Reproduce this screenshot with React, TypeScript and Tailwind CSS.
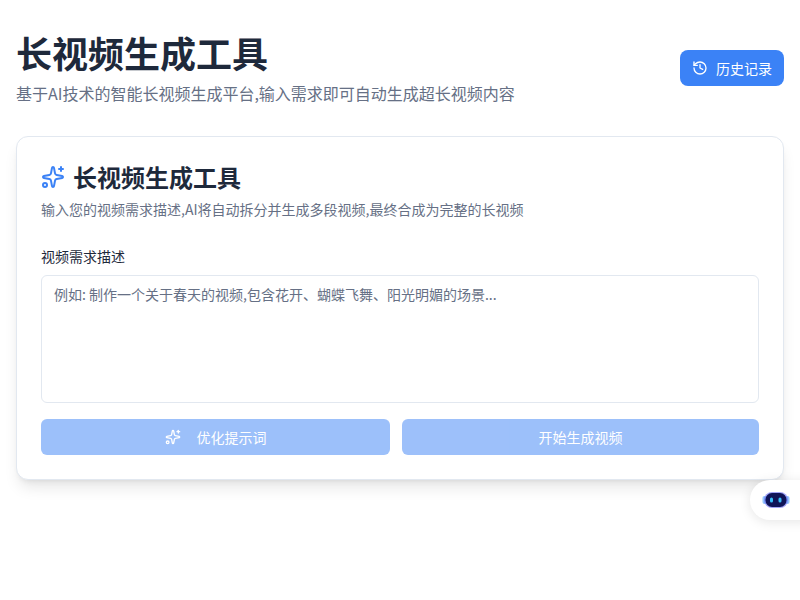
import { History } from "lucide-react";

function Sparkles({ className }: { className: string }) {
  return (
    <svg className={className} viewBox="0 0 24 24" fill="none" stroke="currentColor" strokeWidth="2" strokeLinecap="round" strokeLinejoin="round">
      <path d="M11.017 2.814a1 1 0 0 1 1.966 0l1.051 5.558a2 2 0 0 0 1.594 1.594l5.558 1.051a1 1 0 0 1 0 1.966l-5.558 1.051a2 2 0 0 0-1.594 1.594l-1.051 5.558a1 1 0 0 1-1.966 0l-1.051-5.558a2 2 0 0 0-1.594-1.594l-5.558-1.051a1 1 0 0 1 0-1.966l5.558-1.051a2 2 0 0 0 1.594-1.594z" />
      <path d="M20 2v4" />
      <path d="M22 4h-4" />
      <circle cx="4" cy="20" r="2" />
    </svg>
  );
}

export default function App() {
  return (
    <div className="relative h-[600px] overflow-hidden bg-white font-['Noto_Sans_CJK_SC','Noto_Sans',sans-serif] text-[#1e293b]">
      <div className="p-4 pt-8">
        <div className="mb-[31px] flex items-center justify-between">
          <div>
            <h1 className="mb-2 text-4xl leading-[41px] font-bold">长视频生成工具</h1>
            <p className="text-base leading-6 text-[#667085]">基于AI技术的智能长视频生成平台,输入需求即可自动生成超长视频内容</p>
          </div>
          <button className="mb-px flex h-9 items-center gap-2 rounded-lg bg-[#3b82f6] px-3 text-sm text-white">
            <History className="h-4 w-4" />
            历史记录
          </button>
        </div>
        <div className="rounded-xl border border-[#e2e8f0] bg-white p-6 shadow-lg">
          <div className="flex items-center gap-2">
            <Sparkles className="h-6 w-6 text-[#3b82f6]" />
            <h2 className="text-2xl leading-8 font-bold">长视频生成工具</h2>
          </div>
          <p className="mt-1.5 text-sm leading-5 text-[#667085]">输入您的视频需求描述,AI将自动拆分并生成多段视频,最终合成为完整的长视频</p>
          <label className="mt-[27px] block text-sm leading-5">视频需求描述</label>
          <textarea
            readOnly
            className="mt-[9px] block h-32 w-full resize-none rounded-md border border-[#e2e8f0] bg-white px-3 py-2 text-sm leading-5 placeholder:text-[#667085]"
            placeholder="例如: 制作一个关于春天的视频,包含花开、蝴蝶飞舞、阳光明媚的场景..."
          />
          <div className="mt-4 flex gap-3">
            <button className="flex h-9 w-[349px] items-center justify-center gap-4 rounded-md bg-[#3b82f6] text-sm text-white opacity-50">
              <Sparkles className="h-4 w-4" />
              优化提示词
            </button>
            <button className="flex h-9 flex-1 items-center justify-center rounded-md bg-[#3b82f6] text-sm text-white opacity-50">
              开始生成视频
            </button>
          </div>
        </div>
      </div>
      <div className="absolute top-[480px] left-[750px] flex h-10 w-[60px] items-center rounded-l-[20px] bg-white pl-[12px] shadow-[0_2px_12px_rgba(0,0,0,0.1)]">
        <svg width="28" height="24" viewBox="0 0 28 24">
          <rect x="0.5" y="8" width="4" height="8" rx="2" fill="#93c5fd" />
          <rect x="23.5" y="8" width="4" height="8" rx="2" fill="#93c5fd" />
          <rect x="2" y="4" width="24" height="16" rx="8" fill="#6366f1" opacity="0.6" />
          <rect x="3.5" y="5" width="21" height="14" rx="6.5" fill="#0f1458" />
          <rect x="8" y="9.5" width="3" height="5" rx="1.5" fill="#38bdf8" />
          <rect x="16.5" y="9.5" width="3" height="5" rx="1.5" fill="#38bdf8" />
        </svg>
      </div>
    </div>
  );
}
